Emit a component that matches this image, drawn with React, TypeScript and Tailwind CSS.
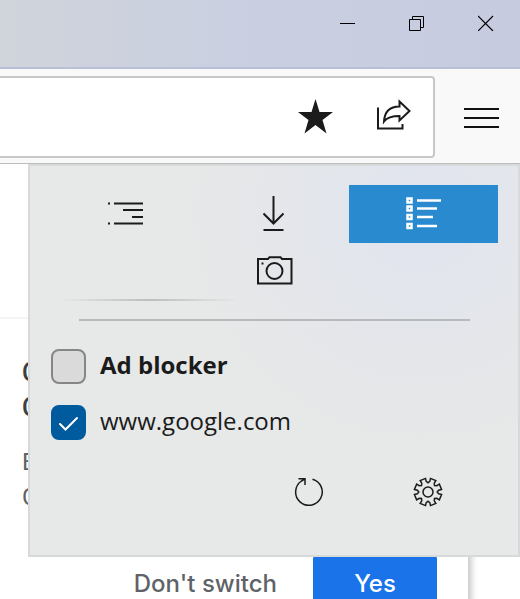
import React from "react";

function gearPath(): string {
  const parts: string[] = [];
  for (let i = 0; i < 8; i++) {
    const centre = i * 45 + 22.5;
    const points: [number, number][] = [
      [-13, 10.8],
      [-12, 13.8],
      [12, 13.8],
      [13, 10.8],
      [22.5, 9.2],
    ];
    for (const [offset, radius] of points) {
      const a = ((centre + offset) * Math.PI) / 180;
      const x = (15 + radius * Math.cos(a)).toFixed(2);
      const y = (15 + radius * Math.sin(a)).toFixed(2);
      parts.push(`${parts.length ? "L" : "M"}${x} ${y}`);
    }
  }
  return parts.join("") + "Z";
}

function TitleBar() {
  return (
    <header className="flex h-[69px] shrink-0 items-start justify-end gap-[53px] border-b-2 border-[#b9bfd6] bg-linear-to-r from-[#d0d4db] via-[#c9cfe1] to-[#c7cbe0] pt-[15px] pr-[26px]">
      <button aria-label="Minimize">
        <svg width="16" height="16" className="block" stroke="#000" fill="none">
          <path d="M0 8.5H15" />
        </svg>
      </button>
      <button aria-label="Restore">
        <svg width="16" height="16" className="block" stroke="#000" fill="none">
          <path d="M.5 4.500H11.500V15.500H.5ZM3.500 4.500V1.500H14.500V12.500H11.500" />
        </svg>
      </button>
      <button aria-label="Close">
        <svg width="16" height="16" className="block" stroke="#000" strokeWidth="1.2" fill="none">
          <path d="M0 1L15 16M15 1L0 16" />
        </svg>
      </button>
    </header>
  );
}

function Toolbar() {
  return (
    <nav className="flex h-[95px] shrink-0 items-center border-b border-[#bcbcbc] bg-[#f9f9f9] pt-[2px]">
      <div className="flex h-[82px] flex-1 items-center rounded-r-[4px] border-2 border-l-0 border-[#c8c8c8] bg-white pr-[22px]">
        <input aria-label="Address" className="h-full min-w-0 flex-1 outline-none" />
        <button aria-label="Favorite">
          <svg width="36" height="36" viewBox="0 0 36 36" className="block" fill="#1b1b1b">
            <path d="M18.500 0L22.500 13H36L25.500 21L29.500 34.500L18.500 26L7.500 34.500L11.500 21L1 13H14.500Z" />
          </svg>
        </button>
        <button aria-label="Share" className="ml-[42px]">
          <svg width="36" height="36" viewBox="0 0 36 36" className="block" stroke="#1b1b1b" strokeWidth="2" fill="none">
            <path d="M3 8.500V29.500H27.500V25" />
            <path d="M24.500 2.500L34.500 12L24.500 21.500V17C17 17 12 18.500 9 22.500C9.500 13.500 14 7.500 24.500 7.500Z" />
          </svg>
        </button>
      </div>
      <button aria-label="Menu" className="mr-[21px] ml-[29px] pt-[2px]">
        <svg width="35" height="20" className="block" stroke="#111" strokeWidth="2">
          <path d="M0 1H35M0 10H35M0 19H35" />
        </svg>
      </button>
    </nav>
  );
}

function PopupTabs() {
  return (
    <div className="grid grid-cols-3">
      <button aria-label="Reading list" className="flex h-[58px] items-center justify-center">
        <svg width="36" height="24" viewBox="0 0 36 24" stroke="#1b1b1b" strokeWidth="2">
          <path d="M0 1.500H2M6 1.500H35M15 8H35M24 15H35M0 21.500H2M6 21.500H35" />
        </svg>
      </button>
      <button aria-label="Downloads" className="flex h-[58px] items-center justify-center pr-[2px]">
        <svg width="22" height="36" viewBox="0 0 22 36" stroke="#1b1b1b" strokeWidth="2" fill="none">
          <path d="M10.500 0V27.500M.5 17.500L10.500 27.500L20.500 17.500M.5 34H20.500" />
        </svg>
      </button>
      <button aria-label="Extensions" className="flex h-[58px] items-center justify-center bg-[#298acf]">
        <svg width="36" height="34" viewBox="0 0 36 34" stroke="#fff" fill="none">
          <path strokeWidth="2.500" d="M1.500 1.500H5.500V5.500H1.500ZM1.500 9.500H5.500V13.500H1.500ZM1.500 18H5.500V22H1.500ZM1.500 27H5.500V31H1.500Z" />
          <path strokeWidth="2.500" d="M11 3.500H35M11 11.500H31M11 20H27M11 29H31" />
        </svg>
      </button>
      <div />
      <button aria-label="Screenshot" className="flex h-[58px] items-center justify-center pb-[2px]">
        <svg width="36" height="30" viewBox="0 0 36 30" stroke="#1b1b1b" strokeWidth="2" fill="none">
          <path d="M1 3H11L12.500 1.200H23.500L25 3H34.500V27.500H1Z" />
          <circle cx="17.500" cy="15" r="8" />
          <path d="M4.500 7.500H6.500" />
        </svg>
      </button>
    </div>
  );
}

function BlockerOption({ label, bold, checked }: { label: string; bold?: boolean; checked?: boolean }) {
  return (
    <label className="flex h-[35px] items-center gap-[14px] text-[24px] leading-[32px] text-[#1b1b1b]">
      <span className="grid">
        <input
          type="checkbox"
          defaultChecked={checked}
          className="peer col-start-1 row-start-1 size-[35px] appearance-none rounded-[8px] border-2 border-[#868686] bg-[#dadada] checked:border-[#005a9e] checked:bg-[#005a9e]"
        />
        <svg
          viewBox="0 0 35 35"
          className="pointer-events-none invisible col-start-1 row-start-1 size-[35px] peer-checked:visible"
          stroke="#fff"
          strokeWidth="2"
          strokeLinecap="round"
          fill="none"
        >
          <path d="M9 19L14.500 24.500L26 13" />
        </svg>
      </span>
      <span className={bold ? "pb-[3px] font-bold" : "pb-[3px]"}>{label}</span>
    </label>
  );
}

function Popup() {
  return (
    <section
      aria-label="Extension panel"
      className="absolute top-[164px] right-0 left-[28px] border-2 border-[#d8d9da] bg-[#e7e8e8] bg-[radial-gradient(circle_at_80%_12%,#e0e4ee_0%,#e7e8e8_45%)] pt-[19px] pr-5 pb-[48px] pl-[21px] font-['Open_Sans','Noto_Sans',sans-serif]"
    >
      <PopupTabs />
      <div className="-mt-[2px] ml-[9px] h-[2px] w-[180px] bg-linear-to-r from-transparent via-[#bdbdbd] to-transparent" />
      <hr className="mt-[18px] mr-[28px] ml-[28px] border-t-2 border-[#b8b9bb]" />
      <div className="mt-[28px] flex flex-col gap-[21px]">
        <BlockerOption label="Ad blocker" bold />
        <BlockerOption label="www.google.com" checked />
      </div>
      <div className="mt-[37px] mr-[55px] flex justify-end gap-[89px]">
        <button aria-label="Reload">
          <svg width="30" height="30" viewBox="0 0 30 30" className="block" stroke="#1b1b1b" strokeWidth="1.500" fill="none">
            <path d="M18.500 2.200A13.300 13.300 0 1 1 7.500 4L11 1.800M4.500 1.800H11V8" />
          </svg>
        </button>
        <button aria-label="Settings">
          <svg width="30" height="30" viewBox="0 0 30 30" className="block" stroke="#1b1b1b" strokeWidth="1.500" fill="none">
            <path d={gearPath()} />
            <circle cx="15" cy="15" r="5" />
          </svg>
        </button>
      </div>
    </section>
  );
}

export default function App() {
  return (
    <div className="relative flex h-screen flex-col overflow-hidden bg-white font-['Roboto',sans-serif]">
      <TitleBar />
      <Toolbar />
      <main className="flex flex-1 flex-col">
        <div className="h-[153px] shrink-0" />
        <div className="mr-[52px] flex-1 border-t-2 border-[#f5f5f5] pt-[36px] pr-[31px] pl-[22px] shadow-[4px_6px_6px_rgba(0,0,0,0.2)]">
          <h1 className="text-[25px] leading-[35px] font-medium text-[#3c4043]">
            C<br />C
          </h1>
          <p className="mt-[20px] text-[24px] leading-[35px] text-[#5f6368]">
            B<br />C
          </p>
          <div className="mt-[40px] flex justify-end gap-[36px] text-[24px] font-medium">
            <button className="h-[58px] font-['Inter',sans-serif] text-[#5f6368]">Don't switch</button>
            <button className="h-[58px] w-[124px] rounded-[4px] bg-[#1a73e8] font-['Inter',sans-serif] text-white">Yes</button>
          </div>
        </div>
      </main>
      <Popup />
    </div>
  );
}
